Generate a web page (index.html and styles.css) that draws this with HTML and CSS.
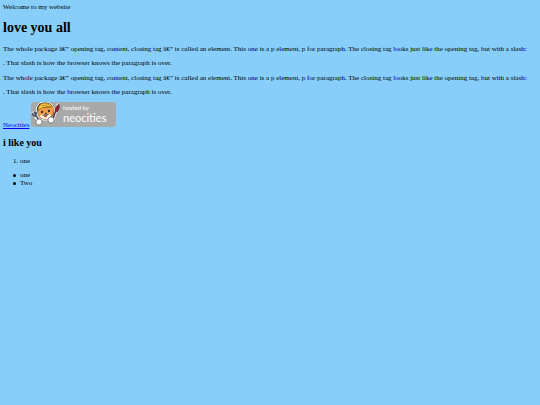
FILE: index.html
```html
<!DOCTYPE html>
<html lang="en">
<head>
<meta charset="UTF-8">
<meta name="viewport" content="width=device-width, initial-scale=1.0">
<title>My website</title>
<link rel="stylesheet" href="styles.css">
</head>
<body>
  Welcome to my website
  <h1>love you all</h1>
  <div class="intro">
    <p>The whole package â€” opening tag, content, closing tag â€” is called an element. This one is a p element, p for paragraph. The closing tag looks just like the opening tag, but with a slash:</p>
    <p>. That slash is how the browser knows the paragraph is over.</p>
  </div>
  <div class="intro">
    <p>The whole package â€” opening tag, content, closing tag â€” is called an element. This one is a p element, p for paragraph. The closing tag looks just like the opening tag, but with a slash:</p>
    <p>. That slash is how the browser knows the paragraph is over.</p>
  </div>
  <div class="links">
    <a href="https://neocities.org">Neocities</a>
    <svg class="badge" viewBox="0 0 85 25" role="img" aria-label="hosted by neocities">
      <rect x="0" y="0" width="85" height="25" rx="3" fill="#a9a9a9"/>
      <!-- white edge around the figure -->
      <path d="M2 11l3 4 3 4M27 3l-2 5-3 9" fill="none" stroke="#fff" stroke-width="3" stroke-linecap="round"/>
      <path d="M6 10C4 4 8 0 14 0c5 0 8 3 9 7 2 6-2 11-9 11-5 0-8-4-8-8z" fill="#3a3630" stroke="#fff" stroke-width="1"/>
      <!-- fork -->
      <path d="M1 11l2 3 2 0 0-4M3 10l2 4 4 6" fill="none" stroke="#3c4c5a" stroke-width="1.400"/>
      <!-- brush -->
      <path d="M25 8l-3 9" fill="none" stroke="#51303b" stroke-width="1.500"/>
      <path d="M28 2c1 3 0 6-2 8l-2-1c0-3 1-5 4-7z" fill="#8d2438" stroke="#3d2630" stroke-width=".5"/>
      <!-- cat -->
      <path d="M8 7l2-1 10-1 2-1c1 4 1 6 0 8-1 3-4 5-8 5-5 0-7-3-7-6 0-2 0-3 1-4z" fill="#ef9c45"/>
      <path d="M9 14c2-2 3-2 5-1 3-2 5-1 6 0-1 3-3 4-6 4s-4-1-5-3z" fill="#fff4df"/>
      <path d="M7 8C7 3 10 1 14 1s7 2 8 4c-5-1-10 0-15 3z" fill="#f3bf3d" stroke="#765020" stroke-width=".5"/>
      <path d="M10 3c3 1 6 1 8-1" fill="none" stroke="#b57b24" stroke-width=".6"/>
      <ellipse cx="11" cy="10" rx="1" ry="1.200" fill="#24211f"/>
      <ellipse cx="18" cy="9" rx="1" ry="1.200" fill="#24211f"/>
      <path d="M14 11l2 0-1 1zM11 13c2 1 5 1 7-1" fill="#333" stroke="#333" stroke-width=".4"/>
      <path d="M13 14l3-1c0 3-3 3-3 1z" fill="#b54839"/>
      <!-- paws -->
      <circle cx="8" cy="20" r="3" fill="#fff" stroke="#555" stroke-width=".6"/>
      <circle cx="20" cy="18" r="3" fill="#fff" stroke="#555" stroke-width=".6"/>
      <text class="badge-small" x="32" y="8">hosted by</text>
      <text class="badge-name" x="32" y="20">neocities</text>
    </svg>
  </div>
  <h2>i like you</h2>
  <ol>
    <li>one</li>
  </ol>
  <ul>
    <li>one</li>
    <li>Two</li>
  </ul>
</body>
</html>
```
FILE: styles.css
```css
body {
  margin: 3px;
  background-color: #87cefa;
  font-family: "Liberation Serif", "Times New Roman", serif;
  font-size: 7px;
  line-height: 8px;
  color: #000;
}

h1 {
  margin: 9px 0;
  font-size: 14px;
  line-height: 16px;
}

h2 {
  margin: 8px 0;
  font-size: 10px;
  line-height: 12px;
}

p {
  margin: 6px 0 0;
}

.intro {
  margin-top: 7px;
}

.links {
  margin-top: 6px;
}

a {
  color: #0000ee;
}

.badge {
  width: 85px;
  height: 25px;
  vertical-align: baseline;
}

.badge-small,
.badge-name {
  font-family: Lato, "Open Sans", sans-serif;
  fill: #fff;
}

.badge-small {
  font-size: 6px;
}

.badge-name {
  font-size: 11px;
}

ol,
ul {
  margin: 6px 0;
}

ol {
  padding-left: 17px;
}

ul {
  padding-left: 10px;
  list-style: none;
}

ul li {
  display: flex;
  align-items: center;
  gap: 4px;
}

ul li::before {
  content: "";
  width: 3px;
  height: 3px;
  border-radius: 50%;
  background-color: #000;
}
```
